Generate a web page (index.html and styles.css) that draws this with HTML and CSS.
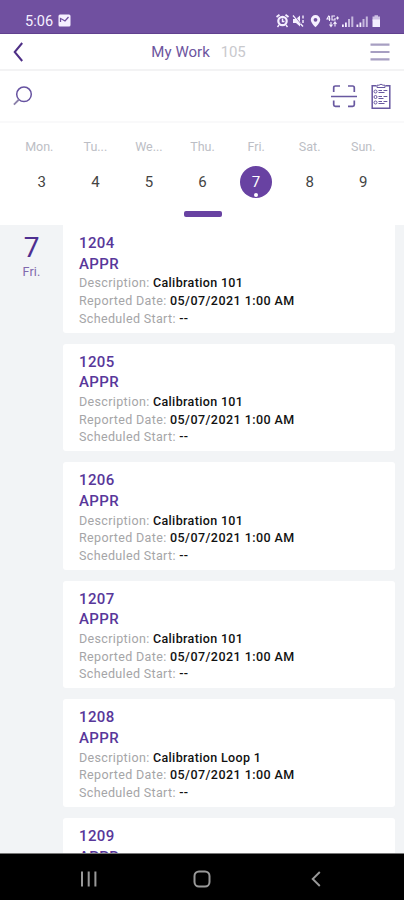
FILE: index.html
```
<!DOCTYPE html>
<html lang="en">
<head>
<meta charset="utf-8">
<title>My Work</title>
<link rel="stylesheet" href="styles.css">
</head>
<body>
<div class="phone">
  <header class="status">
    <span class="clock">5:06</span>
    <svg class="photo" width="13" height="13" viewBox="0 0 13 13"><rect x=".5" y=".5" width="12" height="12" rx="1.500" fill="#f5efff"/><path d="M2.500 8V4.500l2 1 2.500 1.500 3.500-4" fill="none" stroke="#7050a0" stroke-width="1.300"/></svg>
    <svg class="indicators" width="106" height="14" viewBox="0 0 106 14" fill="#f5efff">
      <path d="M.5 3 3.500.8M12.500 3 9.500.8" stroke="#f5efff" stroke-width="1.800"/><circle cx="6.500" cy="7" r="4.200" fill="none" stroke="#f5efff" stroke-width="2.200"/><path d="M6.500 4.500v3h2M3 11l-1.500 2M10 11l1.500 2" fill="none" stroke="#f5efff" stroke-width="1.400"/>
      <path d="M17 5h3l4-3.500v11L20 9h-3z"/><path d="M17 1.500 27 12.500M27 1.500v3M27 6v3" stroke="#f5efff" stroke-width="1.400"/><path d="M18.500 1.500 25 10" stroke="#7050a0" stroke-width=".7"/>
      <path fill-rule="evenodd" d="M39.500 1a4.700 4.700 0 0 0-4.700 4.700C34.800 9 39.500 13.200 39.500 13.200S44.200 9 44.200 5.700A4.700 4.700 0 0 0 39.500 1zm0 2.900a1.900 1.900 0 1 1 0 3.800 1.900 1.900 0 0 1 0-3.800z"/>
      <path d="M53 1.500 51 5h3.500M53.500 2v5M59 2h-3v4h3V4M60 4h3M61.500 2.500v3M55 8v4M53.500 10.500 55 12.500l1.500-2M59 12.500v-4M57.500 10 59 8l1.500 2" fill="none" stroke="#f5efff" stroke-width="1.100"/>
      <path d="M66 10.500h1.800V13H66zM69 8.500h1.800V13H69z"/><path opacity=".65" d="M72 5h2v8h-2zM75.300 2.500h2V13h-2z"/>
      <path d="M80.500 10.500h1.800V13h-1.800zM83.500 8.500h1.800V13h-1.800z"/><path opacity=".65" d="M86.500 5h2v8h-2zM89.800 2.500h2V13h-2z"/>
      <path opacity=".7" d="M98.500 1.200h3.500v1.300h2v4h-7.500v-4h2z"/><path d="M96.500 5.500h7.500V13h-7.500z"/>
    </svg>
  </header>
  <nav class="titlebar">
    <svg class="back" width="11" height="20" viewBox="0 0 11 20"><path d="M9.200 1 1.700 10l7.500 9" fill="none" stroke="#4e2f86" stroke-width="2"/></svg>
    <h1 class="title">My Work <span class="count">105</span></h1>
    <svg class="menu" width="20" height="18" viewBox="0 0 20 18"><path d="M.5 1.700h19M.5 9h19M.5 16.300h19" stroke="#a79fc2" stroke-width="2.200"/></svg>
  </nav>
  <div class="tools">
    <svg class="search" width="20" height="20" viewBox="0 0 20 20"><circle cx="11" cy="8.300" r="7.300" fill="none" stroke="#6652a0" stroke-width="1.500"/><path d="M6 13.500.9 18.600" stroke="#8c82aa" stroke-width="1.800"/></svg>
    <svg class="scan" width="28" height="24" viewBox="0 0 28 24"><path d="M3.700 8V3.700Q3.700 2 5.400 2H10M18 2h4.600q1.700 0 1.700 1.700V8M3.700 16.500v4.300q0 1.500 1.700 1.500H10M18 22.300h4.600q1.700 0 1.700-1.500v-4.300M1 12.500h26" fill="none" stroke="#6858a0" stroke-width="1.700"/></svg>
    <svg class="list" width="20" height="27" viewBox="0 0 20 27" fill="none" stroke="#6858a0"><path d="M5.500 2.700H1.200v22.600h17.600V2.700h-4.300" stroke-width="1.500"/><path d="M6 4.500V2.200h2Q10 .2 12 2.200h2v2.300z"/><circle cx="4.500" cy="8.500" r="1.500"/><circle cx="4.500" cy="14" r="1.500"/><circle cx="4.500" cy="19.500" r="1.500"/><path d="M7.500 7.500H11M12.500 7.500h3.800M7.500 9.500h6M7.500 13.500H11M12.500 13.500h3.800M7.500 15.500h5M7.500 18.500H11M12.500 18.500h3.800M7.500 20.500h6"/></svg>
  </div>
  <section class="calendar">
    <div class="week">
      <div class="day"><span class="dow first">Mon.</span><span class="num">3</span></div>
      <div class="day"><span class="dow">Tu...</span><span class="num">4</span></div>
      <div class="day"><span class="dow">We...</span><span class="num">5</span></div>
      <div class="day"><span class="dow">Thu.</span><span class="num">6</span></div>
      <div class="day"><span class="dow">Fri.</span><span class="num selected">7</span></div>
      <div class="day"><span class="dow">Sat.</span><span class="num">8</span></div>
      <div class="day"><span class="dow">Sun.</span><span class="num">9</span></div>
    </div>
    <div class="handle"></div>
  </section>
  <main class="agenda">
    <aside class="date"><span class="date-num">7</span><span class="date-dow">Fri.</span></aside>
    <div class="cards">
      <article class="card"><h2>1204</h2><h2>APPR</h2><p>Description: <b>Calibration 101</b></p><p>Reported Date: <b class="time">05/07/2021 1:00 AM</b></p><p>Scheduled Start: <b>--</b></p></article>
      <article class="card"><h2>1205</h2><h2>APPR</h2><p>Description: <b>Calibration 101</b></p><p>Reported Date: <b class="time">05/07/2021 1:00 AM</b></p><p>Scheduled Start: <b>--</b></p></article>
      <article class="card"><h2>1206</h2><h2>APPR</h2><p>Description: <b>Calibration 101</b></p><p>Reported Date: <b class="time">05/07/2021 1:00 AM</b></p><p>Scheduled Start: <b>--</b></p></article>
      <article class="card"><h2>1207</h2><h2>APPR</h2><p>Description: <b>Calibration 101</b></p><p>Reported Date: <b class="time">05/07/2021 1:00 AM</b></p><p>Scheduled Start: <b>--</b></p></article>
      <article class="card"><h2>1208</h2><h2>APPR</h2><p>Description: <b>Calibration Loop 1</b></p><p>Reported Date: <b class="time">05/07/2021 1:00 AM</b></p><p>Scheduled Start: <b>--</b></p></article>
      <article class="card"><h2>1209</h2><h2>APPR</h2></article>
    </div>
  </main>
  <footer class="softkeys">
    <svg width="18" height="16" viewBox="0 0 18 16"><path d="M2 .5v15M8.700.5v15M15.400.5v15" stroke="#999" stroke-width="2"/></svg>
    <svg class="home" width="18" height="18" viewBox="0 0 18 18"><rect x="1.500" y="1.500" width="15" height="15" rx="4.500" fill="none" stroke="#999" stroke-width="2"/></svg>
    <svg width="10" height="16" viewBox="0 0 10 16"><path d="M8.800 1 1.700 8l7.100 7" fill="none" stroke="#999" stroke-width="1.900"/></svg>
  </footer>
</div>
</body>
</html>
```
FILE: styles.css
```
* { box-sizing: border-box; }
body { margin: 0; font-family: Roboto, sans-serif; background: #fff; }
h1, h2, p { margin: 0; }
svg { display: block; flex: none; }
.phone { width: 404px; height: 900px; display: flex; flex-direction: column; overflow: hidden; }
.status { height: 34px; flex: none; display: flex; align-items: flex-start; padding: 14px 22px 0 25px; background: #7050a0; border-bottom: 1px solid #61418f; color: #f5efff; }
.clock { font-size: 14.500px; line-height: 16px; width: 33px; letter-spacing: .1px; }
.indicators { margin-left: auto; }
.titlebar { height: 37px; flex: none; display: flex; align-items: center; padding: 0 14px 0 13px; border-bottom: 2px solid #f3f3f4; }
.title { flex: 1; text-align: center; font-size: 15px; font-weight: 400; color: #6d559e; letter-spacing: .05px; padding-left: 3px; }
.count { color: #c9c9cd; margin-left: 7px; letter-spacing: -.1px; }
.tools { height: 52px; flex: none; display: flex; align-items: center; padding: 0 13px; border-bottom: 2px solid #f9f9fa; }
.scan { margin-left: auto; margin-right: 13px; }
.calendar { height: 102px; flex: none; padding: 14px 14px 0 15px; }
.week { display: grid; grid-template-columns: repeat(7, 1fr); }
.day { display: flex; flex-direction: column; align-items: center; }
.dow { font-size: 12.500px; line-height: 20px; color: #bcbec5; }
.first { margin-left: -5px; }
.num { width: 32px; height: 32px; margin: 9px 0 0 0; border-radius: 50%; font-size: 15px; line-height: 32px; text-align: center; color: #444; position: relative; }
.selected { background: #6842a2; color: #fff; }
.selected::after { content: ""; position: absolute; left: 14px; bottom: 1px; width: 4px; height: 4px; border-radius: 50%; background: #fff; }
.handle { width: 38px; height: 6px; border-radius: 2px; background: #6842a2; margin: 13px auto 0; }
.agenda { height: 628px; flex: none; display: flex; overflow: hidden; background: #f2f4f6; }
.date { width: 63px; flex: none; display: flex; flex-direction: column; align-items: center; padding-top: 7px; color: #4e2f91; }
.date-num { font-size: 28px; line-height: 32px; }
.date-dow { font-size: 12.500px; line-height: 15px; color: #8069ad; letter-spacing: .2px; }
.cards { width: 332px; display: flex; flex-direction: column; gap: 11px; }
.card { height: 107.600px; flex: none; padding: 8px 16px 0; background: #fff; border-radius: 0 0 3px 3px; white-space: nowrap; }
.card + .card { border-radius: 3px; }
.card h2 { font-size: 15px; line-height: 20.700px; font-weight: 500; color: #58379a; letter-spacing: .4px; }
.card p { font-size: 12.500px; line-height: 17.600px; color: #a5a5a7; letter-spacing: .35px; }
.card b { font-weight: 500; color: #111; }
.card .time { letter-spacing: .45px; }
.softkeys { height: 47px; flex: none; display: flex; align-items: center; justify-content: space-between; padding: 3px 83px 0 80px; background: #000; border-top: 1px solid #777; }
.home { margin-right: 5px; }
```
